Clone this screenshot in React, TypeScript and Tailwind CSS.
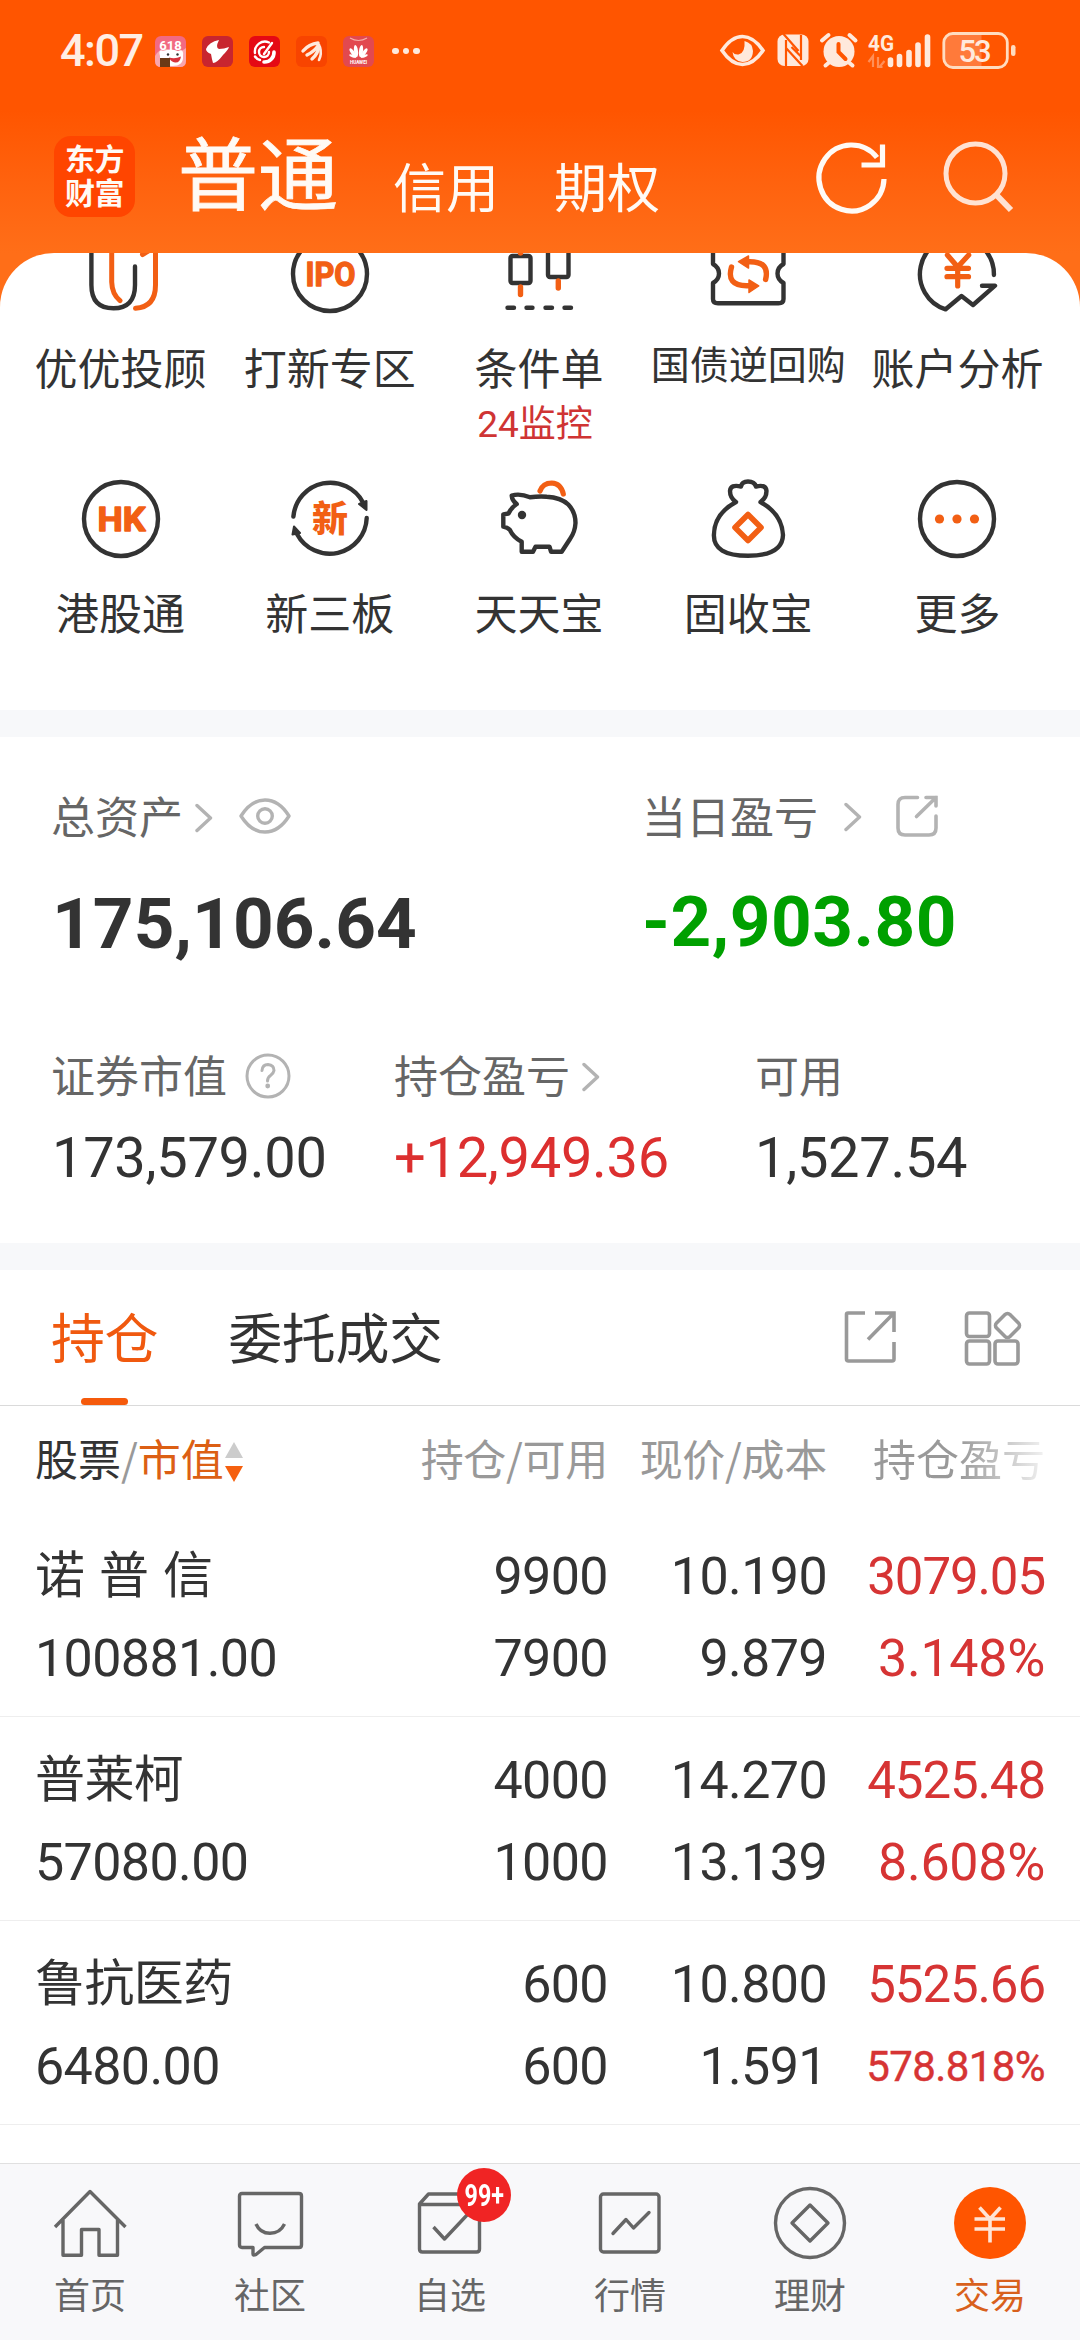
import type { ReactNode } from "react";

const CJK = "font-['Noto_Sans_CJK_SC',sans-serif]";
const NUM = "font-['Roboto','Noto_Sans_CJK_SC',sans-serif]";
const INK = "#333333";
const ORANGE = "#f25f14";

function StatusBar() {
  return (
    <div className="flex h-[102px] items-center pl-[60px] pr-[64px]">
      <span className={`${NUM} w-[95px] text-[45px] font-medium leading-[60px] tracking-[-1.5px] text-[#ffeee4]`}>4:07</span>
      <div className="flex gap-4">
        <svg width="31" height="31" viewBox="0 0 31 31">
          <rect width="31" height="31" rx="6" fill="#f26a82" />
          <path d="M0 20 Q6 10 15 14 T31 12 V25 Q31 31 25 31 H6 Q0 31 0 25Z" fill="#f9a6ae" />
          <path d="M5 20 Q3 13 8 15 Q16 12 23 15 Q29 12 28 20 Q29 30 17 30 Q4 30 5 20Z" fill="#fff" />
          <text x="15.500" y="13.500" textAnchor="middle" fontSize="13" fontWeight="700" fill="#fff" fontFamily="Roboto">618</text>
          <circle cx="13" cy="18.500" r="1.200" fill="#333" /><circle cx="22.500" cy="18.500" r="1.200" fill="#333" />
          <path d="M14 21.500 Q20 23.500 26 20.500 Q25 27 20 26.500 Q16 26 14 21.500Z" fill="#d8323c" />
          <rect x="5" y="22" width="10" height="9" fill="#6b3a16" />
        </svg>
        <svg width="31" height="31" viewBox="0 0 31 31">
          <rect width="31" height="31" rx="6" fill="#c8252f" />
          <path d="M17 4 Q7 6 4 13 Q4 16 9 18 Q10 24 11 27 Q15 27 21 19 Q26 14 27 11 Q22 13 17 13 Q13 12 17 4Z" fill="#fff" />
        </svg>
        <svg width="31" height="31" viewBox="0 0 31 31">
          <rect width="31" height="31" rx="6" fill="#e50914" />
          <g fill="none" stroke="#fff" strokeWidth="2.400" strokeLinecap="round">
            <path d="M20 6.500 A10 10 0 0 0 6 17" /><path d="M15 26 A9.500 9.500 0 0 0 25 16" strokeWidth="3.600" />
            <path d="M23 7 L15 18" /><path d="M15 11 A5 5 0 1 0 20 16" />
            <path d="M6 20.500 Q8 23.500 11 24" />
          </g>
        </svg>
        <svg width="31" height="31" viewBox="0 0 31 31">
          <rect width="31" height="31" rx="6" fill="#f84400" />
          <g fill="none" stroke="#ffe9dc" strokeLinecap="round" strokeWidth="3.400">
            <path d="M22 7 Q13 8 7 15" /><path d="M22.500 9 Q19 15 11 19" /><path d="M23 10 Q22 18 16 23" /><path d="M24 11 Q26 18 23 24" strokeWidth="2.600" />
          </g>
        </svg>
        <svg width="31" height="31" viewBox="0 0 31 31">
          <rect width="31" height="31" rx="6" fill="#e2494f" />
          <path d="M7 2 Q15.500 7 24 2" fill="none" stroke="#f5b0a8" strokeWidth="1.200" />
          <g fill="#fff">
            <ellipse cx="13" cy="15" rx="2" ry="6" transform="rotate(-8 13 15)" /><ellipse cx="18" cy="15" rx="2" ry="6" transform="rotate(8 18 15)" />
            <ellipse cx="10" cy="17" rx="1.800" ry="5.500" transform="rotate(-35 10 17)" /><ellipse cx="21" cy="17" rx="1.800" ry="5.500" transform="rotate(35 21 17)" />
            <ellipse cx="9.500" cy="20" rx="1.300" ry="3.500" transform="rotate(-70 9.500 20)" /><ellipse cx="21.500" cy="20" rx="1.300" ry="3.500" transform="rotate(70 21.500 20)" />
          </g>
          <text x="15.500" y="27.500" textAnchor="middle" fontSize="4.600" fontWeight="700" fill="#fff" fontFamily="Roboto">HUAWEI</text>
        </svg>
      </div>
      <div className="ml-[18px] flex gap-1">
        <i className="size-[6.5px] rounded-full bg-[#ffe9dc]" />
        <i className="size-[6.5px] rounded-full bg-[#ffe9dc]" />
        <i className="size-[6.5px] rounded-full bg-[#ffe9dc]" />
      </div>
      <svg className="ml-auto" width="297" height="42" viewBox="718.500 30 297 42" fill="#ffe9dc">
        <path d="M721.500 50.500 Q731 36.500 742 36.500 T762.500 50.500 Q753 64.500 742 64.500 T721.500 50.500Z" fill="none" stroke="#ffe9dc" strokeWidth="3.600" />
        <path d="M744 41 Q752 43 752.500 51 Q752 62 742 62 Q733 61 732 52 Q734 55 738 54.500 Q745 53 744 41Z" />
        <rect x="777" y="34.500" width="31" height="31.500" rx="7" />
        <path d="M785.500 66 V40 M783 34 L798 51 M800.500 35 V60 M785.500 48 L802 66 M791 47 L800 56" stroke="#ff5500" strokeWidth="2.200" fill="none" />
        <circle cx="838.500" cy="51.500" r="15.500" />
        <path d="M821.500 40.500 L828 35 M855 40.500 L849 35 M828 63 L825 65.500 M849 63 L852 65.500" stroke="#ffe9dc" strokeWidth="4" strokeLinecap="round" />
        <path d="M838 44 V52 L845 59" stroke="#ff5500" strokeWidth="4" fill="none" strokeLinecap="round" />
        <text x="867.500" y="50.500" fontSize="22.500" fontWeight="700" fontFamily="Roboto" textLength="26" lengthAdjust="spacingAndGlyphs">4G</text>
        <path d="M868 62 L872.500 56 V67 M882 67 L877.500 67 V57 M879 67 L884 61" fill="none" stroke="#ff8f58" strokeWidth="2.200" />
        <g stroke="#ffe9dc" strokeWidth="5.600" strokeLinecap="round">
          <path d="M890 60 V64.500 M899 56.500 V64.500 M908.500 52.500 V64.500 M917.500 45 V64.500 M927 37 V64.500" />
        </g>
        <path d="M953 34 H981 V67 H953 Q944 67 944 58 V43 Q944 34 953 34Z" fill="#ff7a3a" />
        <rect x="943.300" y="33.500" width="63.500" height="34" rx="9" fill="none" stroke="#ffdcc0" strokeWidth="2.800" />
        <rect x="1010.500" y="45" width="4.500" height="11" rx="2.200" fill="#ffdcc0" />
        <text x="974.500" y="61.500" fontSize="31" fontWeight="500" fontFamily="Roboto" textAnchor="middle" textLength="33">53</text>
      </svg>
    </div>
  );
}

function Header() {
  return (
    <div className={`${CJK} flex h-[151px] items-start pl-[54px] text-[#fffaf5]`}>
      <div className="mt-[34px] size-[81px] break-all rounded-[17px] bg-[#ff4500] pl-[11px] pr-[8px] pt-[4px] text-[30px] font-bold leading-[34px] tracking-[-0.5px]">
        东方财富
      </div>
      <span className="ml-[43px] mt-[11px] text-[80px] leading-[112px] [-webkit-text-stroke:0.8px_#fffaf5]">普通</span>
      <span className="ml-[55px] mt-[48px] text-[53px] leading-[70px]">信用</span>
      <span className="ml-[55px] mt-[48px] text-[53px] leading-[70px]">期权</span>
      <svg className="ml-auto mt-[34px]" width="82" height="82" viewBox="808 136 82 82" fill="none" stroke="#fffaf5" strokeWidth="5.200">
        <path d="M883 179 A32.500 33 0 1 1 876 157.500" />
        <path d="M881.500 144.500 V165 H860.500" />
      </svg>
      <svg className="ml-[49px] mr-[58px] mt-[34px]" width="82" height="82" viewBox="940 136 82 82" fill="none" stroke="#ffe2d2" strokeWidth="5">
        <circle cx="975.500" cy="173.500" r="29.500" />
        <path d="M996 194.500 L1011 210" strokeWidth="6" />
      </svg>
    </div>
  );
}

function GlyphBox({ children }: { children: ReactNode }) {
  return (
    <svg width="84" height="84" viewBox="0 0 84 84" fill="none" stroke={INK} strokeWidth="4.400" strokeLinecap="round" strokeLinejoin="round">
      {children}
    </svg>
  );
}

const shortcuts: { label: string; note?: string; small?: boolean; icon: ReactNode }[] = [
  {
    label: "优优投顾",
    icon: (
      <>
        <path d="M12.400 10 V53 Q12.400 76.300 34.500 76.300 Q56 76.300 56 53 V34.500" />
        <path d="M32.700 10 V50 Q33 62 41 68.700 M76.500 10 V53 Q76.500 75 56.500 76.300 M63.500 22.500 L76 15" stroke={ORANGE} strokeWidth="5" />
      </>
    ),
  },
  {
    label: "打新专区",
    icon: (
      <>
        <circle cx="42" cy="42" r="37" />
        <text x="42.500" y="54" textAnchor="middle" fontSize="34" fontWeight="700" fill={ORANGE} stroke={ORANGE} strokeWidth="1.400" fontFamily="Roboto" textLength="50" lengthAdjust="spacingAndGlyphs">IPO</text>
      </>
    ),
  },
  {
    label: "条件单",
    note: "24监控",
    icon: (
      <>
        <rect x="13.500" y="24" width="20" height="27" rx="2" />
        <rect x="51" y="12" width="20.500" height="33" rx="2" />
        <path d="M23.500 55 V62.500 M61.300 49 V56 M23.500 14 V21" stroke={ORANGE} strokeWidth="5.400" />
        <path d="M10.500 75.700 H17 M29.500 75.700 H35.500 M48.500 75.700 H55 M67.500 75.700 H74" />
      </>
    ),
  },
  {
    label: "国债逆回购",
    small: true,
    icon: (
      <>
        <path d="M7 10 V32 Q13 35.500 13 41.500 Q13 47.500 7 51 V67 Q7 71.300 12 71.300 H72.500 Q77.500 71.300 77.500 67 V51 Q71.500 47.500 71.500 41.500 Q71.500 35.500 77.500 32 V10" />
        <path d="M25.500 35 Q20 53.700 40.600 53.700 H44 M59.600 47.500 Q64 29.700 44 29.700 H40" stroke={ORANGE} strokeWidth="5.400" />
        <path d="M43 48 L52.700 54 L43 60.500Z M42.500 24 L32.500 29.700 L42.500 36Z" fill={ORANGE} stroke={ORANGE} strokeWidth="1.500" />
      </>
    ),
  },
  {
    label: "账户分析",
    icon: (
      <>
        <path d="M78.900 43 A37 37 0 1 0 30.600 77.300 L46.500 64 L58 73 L80 53.700 H67" />
        <path d="M32.400 23 L42.700 35 L53.700 23 M32 36.300 H53.500 M32 44.700 H53.500 M42.700 35 V54" stroke={ORANGE} strokeWidth="5.200" />
      </>
    ),
  },
  {
    label: "港股通",
    icon: (
      <>
        <circle cx="42" cy="42" r="37" />
        <text x="42.500" y="54" textAnchor="middle" fontSize="34" fontWeight="700" fill={ORANGE} stroke={ORANGE} strokeWidth="1.400" fontFamily="Roboto" textLength="48" lengthAdjust="spacingAndGlyphs">HK</text>
      </>
    ),
  },
  {
    label: "新三板",
    icon: (
      <>
        <path d="M5.400 39.500 A37 37 0 0 1 75 25.500 M78.700 41 A37 37 0 0 1 9 57" />
        <path d="M71 27 L78.500 24 V33Z M6 49.500 L12 56 L4.500 57.500Z" fill={INK} strokeWidth="2" />
        <text x="42" y="55" textAnchor="middle" fontSize="36" fontWeight="900" fill={ORANGE} stroke="none" fontFamily="Noto Sans CJK SC">新</text>
      </>
    ),
  },
  {
    label: "天天宝",
    icon: (
      <>
        <path d="M14.700 18.500 Q23 16 33 20.300 Q42 19 49.700 19.700 Q64 20.500 71.300 27.500 Q78.500 35 78.500 46 Q78 55 73 62 L64.700 74.700 H54 L52.500 69.700 H38.500 L36 74.700 H24.700 V64.700 Q16 60 13 53 Q10.500 50.500 6.300 49.700 V37.300 L11.500 36.500 Q14 31 19.700 27 Q15 23.500 14.700 18.500Z" />
        <circle cx="25" cy="38" r="4.200" fill={INK} stroke="none" />
        <path d="M43 14 Q46 6 54.700 6 Q64 6.500 66.300 17" stroke={ORANGE} strokeWidth="5.200" />
      </>
    ),
  },
  {
    label: "固收宝",
    icon: (
      <>
        <path d="M30 25 Q8 37 7.900 58 Q7.500 78.700 42 78.700 Q76.500 78.700 77 58 Q76 37 54.500 25 Q60.500 21 60.500 14 Q60 7 50 9.500 Q48.500 4.500 42 4.500 Q36 4.500 35 9.500 Q24.500 7 24 14 Q24 21 30 25Z" />
        <path d="M42 37.500 L55 50.500 L42 63.500 L29 50.500Z" stroke={ORANGE} strokeWidth="5.600" />
      </>
    ),
  },
  {
    label: "更多",
    icon: (
      <>
        <circle cx="42" cy="42" r="37" />
        <g fill={ORANGE} stroke="none"><circle cx="24.500" cy="42" r="4.600" /><circle cx="42" cy="42" r="4.600" /><circle cx="59.500" cy="42" r="4.600" /></g>
      </>
    ),
  },
];

function Shortcuts() {
  return (
    <div className="h-[457px] overflow-hidden rounded-t-[54px] bg-white">
      <div className="-mt-[21px] grid auto-rows-[245px] grid-cols-5 pl-4 pr-[18px]">
        {shortcuts.map((s) => (
          <div key={s.label} className={`${CJK} flex flex-col items-center text-[#333]`}>
            <GlyphBox>{s.icon}</GlyphBox>
            <span className={s.small ? "mt-[16px] whitespace-nowrap text-[39px] leading-[60px]" : "mt-[20px] whitespace-nowrap text-[43px] leading-[60px]"}>{s.label}</span>
            {s.note && <span className={`${NUM} mr-[8px] whitespace-nowrap text-[37px] leading-[58px] text-[#cf3434]`}>{s.note}</span>}
          </div>
        ))}
      </div>
    </div>
  );
}

function Chevron({ className }: { className: string }) {
  return (
    <svg className={className} width="18" height="30" viewBox="0 0 18 30" fill="none" stroke="#b3b3b3" strokeWidth="3.400" strokeLinecap="round" strokeLinejoin="round">
      <path d="M2 2.500 L15.500 15 L2 27.500" />
    </svg>
  );
}

function Assets() {
  const label = `${CJK} flex h-[60px] items-center whitespace-nowrap text-[44px] leading-[60px] text-[#666]`;
  const value = `${NUM} whitespace-nowrap text-[56px] leading-[70px] tracking-[-0.3px]`;
  return (
    <section className="h-[506px] bg-white pl-[51px] pt-[48px]">
      <div className="grid grid-cols-[591px_1fr]">
        <div>
          <div className={label}>
            总资产
            <Chevron className="ml-[12px] mt-1.5" />
            <svg className="ml-[26px] mt-0.5" width="52" height="38" viewBox="0 0 52 38" fill="none" stroke="#b3b3b3" strokeWidth="3.400">
              <path d="M2 19 Q12 3 26 3 T50 19 Q40 35 26 35 T2 19Z" strokeLinejoin="round" /><circle cx="26" cy="19" r="7.300" />
            </svg>
          </div>
          <div className={`${NUM} mt-[32px] pl-px text-[71px] font-bold leading-[94px] tracking-[0.1px] text-[#333]`}>175,106.64</div>
        </div>
        <div>
          <div className={label}>
            当日盈亏
            <Chevron className="ml-[26px] mt-1" />
            <svg className="ml-[33px] mt-0.5" width="44" height="44" viewBox="0 0 44 44" fill="none" stroke="#b3b3b3" strokeWidth="3.600" strokeLinecap="round">
              <path d="M22.500 3.500 H10 Q3 3.500 3 10.500 V34 Q3 41 10 41 H34 Q41 41 41 34 V22 M31 3.500 H41 V12 M41 3.500 L21.500 22.500" />
            </svg>
          </div>
          <div className={`${NUM} mt-[30px] text-[71px] font-bold leading-[94px] tracking-[0.5px] text-[#00a000]`}>-2,903.80</div>
        </div>
      </div>
      <div className="mt-[73px] grid grid-cols-[343px_361px_1fr]">
        <div>
          <div className={label}>
            证券市值
            <svg className="ml-[18px] mt-1" width="46" height="46" viewBox="0 0 46 46" fill="none" stroke="#b3b3b3" strokeWidth="3">
              <circle cx="23" cy="23" r="21" />
              <path d="M17 17.500 Q17.500 11.500 23 11.500 Q29 12 29 17.500 Q28.500 20.500 25.500 22.500 Q22.500 24.500 22.500 28" strokeLinecap="round" />
              <circle cx="22.700" cy="33" r="2.400" fill="#b3b3b3" stroke="none" />
            </svg>
          </div>
          <div className={`${value} mt-[19px] pl-px text-[#333]`}>173,579.00</div>
        </div>
        <div>
          <div className={label}>
            持仓盈亏
            <Chevron className="ml-[12px] mt-1.5" />
          </div>
          <div className={`${value} mt-[19px] text-[#dc2f2f]`}>+12,949.36</div>
        </div>
        <div>
          <div className={label}>可用</div>
          <div className={`${value} mt-[19px] text-[#333]`}>1,527.54</div>
        </div>
      </div>
    </section>
  );
}

const holdings = [
  { name: "诺 普 信", value: "100881.00", qty: "9900", avail: "7900", price: "10.190", cost: "9.879", pl: "3079.05", pct: "3.148%" },
  { name: "普莱柯", value: "57080.00", qty: "4000", avail: "1000", price: "14.270", cost: "13.139", pl: "4525.48", pct: "8.608%" },
  { name: "鲁抗医药", value: "6480.00", qty: "600", avail: "600", price: "10.800", cost: "1.591", pl: "5525.66", pct: "578.818%" },
];

function Holdings() {
  const cols = "grid grid-cols-[361px_212px_219px_1fr] pl-[35px] pr-[35px]";
  return (
    <section className="h-[893px] overflow-hidden bg-white">
      <div className={`${CJK} flex h-[136px] items-start border-b border-[#dadada] pl-[51px] text-[54px] leading-[80px] tracking-[-0.4px]`}>
        <div className="flex h-[135px] flex-col items-center justify-between pt-[26px] text-[#f0590f]">
          持仓
          <i className="h-[7px] w-[47px] rounded-full bg-[#f55a0c]" />
        </div>
        <span className="ml-[70px] pt-[26px] text-[#333]">委托成交</span>
        <svg className="ml-auto mt-[38px]" width="56" height="56" viewBox="0 0 56 56" fill="none" stroke="#999" strokeWidth="3.600">
          <path d="M23 5 H6 Q4.500 5 4.500 6.500 V51 Q4.500 53 6.500 53 H50 Q52 53 52 51 V34 M33 5 H52 V24 M51 6 L26 31.500" />
        </svg>
        <svg className="ml-[64px] mr-[58px] mt-[38px]" width="60" height="60" viewBox="0 0 60 60" fill="none" stroke="#999" strokeWidth="3.600">
          <rect x="4.500" y="5" width="23" height="23.500" rx="3" /><rect x="4.500" y="33" width="23" height="23" rx="3" /><rect x="33" y="33" width="23" height="23" rx="3" />
          <rect x="36" y="8" width="19" height="19" rx="3.500" transform="rotate(45 45.500 17.500)" />
        </svg>
      </div>
      <div className={`${CJK} ${cols} h-[107px] whitespace-nowrap pt-[21px] text-[43px] leading-[60px] text-[#999]`}>
        <div className="flex items-start text-[#333]">
          股票<span className="text-[#999]">/</span><span className="text-[#dc5f14]">市值</span>
          <svg className="mt-[14px]" width="20" height="42" viewBox="0 0 20 42">
            <path d="M10 1 L19 17 H1Z" fill="#ccc" /><path d="M10 41 L19 25 H1Z" fill="#f5600f" />
          </svg>
        </div>
        <span className="text-right tracking-[-0.3px]">持仓/可用</span>
        <span className="text-right tracking-[-0.3px]">现价/成本</span>
        <span className="bg-linear-to-r from-[#999] from-[60%] to-[#f2f2f2] bg-clip-text text-right text-transparent">持仓盈亏</span>
      </div>
      {holdings.map((h) => (
        <div key={h.name} className={`${NUM} ${cols} h-[204px] grid-rows-[82px_82px] items-center whitespace-nowrap border-b border-[#eeeeee] pt-[23px] text-[52px] leading-[82px] tracking-[-0.6px] text-[#333]`}>
          <span className={`${CJK} pb-[11px] text-[50px] leading-[71px] [word-spacing:4px]`}>{h.name}</span>
          <span className="text-right">{h.qty}</span>
          <span className="text-right">{h.price}</span>
          <span className="text-right text-[51px] tracking-[-1.1px] text-[#d63434]">{h.pl}</span>
          <span>{h.value}</span>
          <span className="text-right">{h.avail}</span>
          <span className="text-right">{h.cost}</span>
          <span className={h.pct.length > 7 ? "text-right text-[42px] tracking-[-0.6px] text-[#d63434] [-webkit-text-stroke:0.4px_#d63434]" : "text-right tracking-[-0.3px] text-[#d63434]"}>{h.pct}</span>
        </div>
      ))}
    </section>
  );
}

const tabs: { label: string; active?: boolean; badge?: string; icon: ReactNode }[] = [
  { label: "首页", icon: <path d="M5 44 L40 8.500 L75.500 44 M13 37 V72.300 H31.500 V46.500 H49 V72.300 H67.500 V37" /> },
  { label: "社区", icon: <><path d="M12 10.500 H69 Q71.500 10.500 71.500 13 V62 Q71.500 64.500 69 64.500 H34.500 L26 71.500 Q23 73 23 71 V64.500 H12 Q9.500 64.500 9.500 62 V13 Q9.500 10.500 12 10.500Z" /><path d="M26 41 Q30 50.300 40 50.300 T54.500 41" /></> },
  { label: "自选", badge: "99+", icon: <path d="M9.500 21 L18.500 11 H63 L69.500 21 V66 Q69.500 69 66.500 69 H12.500 Q9.500 69 9.500 66Z M9.500 21.500 H69.500 M23.500 44 L34.500 56 L58 31" /> },
  { label: "行情", icon: <><rect x="10.500" y="11" width="58.500" height="58" rx="3" /><path d="M23 50.500 L36 36.500 L43.500 45 L59 29.500" strokeLinecap="round" /></> },
  { label: "理财", icon: <><circle cx="40" cy="40" r="34.500" /><path d="M40 22 L58 40 L40 58 L22 40Z" /></> },
  { label: "交易", active: true, icon: <><circle cx="40" cy="40" r="36" fill="#ff5500" stroke="none" /><path d="M29.500 24.500 L40 36 L50.500 24.500 M24.500 36 H55 M24.500 46 H55 M40 36 V59.500" stroke="#ffe4d6" strokeWidth="3.600" /></> },
];

function TabBar() {
  return (
    <nav className="grid h-[177px] grid-cols-6 border-t border-[#e0e0e0] bg-[#f8f8fa]">
      {tabs.map((t) => (
        <div key={t.label} className={`${CJK} relative flex flex-col items-center pt-[19px] text-[36px] leading-[50px] ${t.active ? "text-[#d8601c]" : "text-[#666]"}`}>
          <svg width="80" height="80" viewBox="0 0 80 80" fill="none" stroke="#666" strokeWidth="3.400" strokeLinejoin="round">{t.icon}</svg>
          <span className="mt-[5px]">{t.label}</span>
          {t.badge && (
            <span className={`${NUM} absolute left-[97px] top-[4px] flex size-[54px] items-center justify-center rounded-full bg-[#f02424] text-[31px] font-bold leading-none text-white`}>
              <span className="scale-x-[0.75]">{t.badge}</span>
            </span>
          )}
        </div>
      ))}
    </nav>
  );
}

export default function App() {
  return (
    <div className="flex h-[2340px] w-[1080px] flex-col overflow-hidden bg-white">
      <div className="bg-linear-to-b from-[#ff5500] from-[110px] to-[#ff6e18] to-[253px]">
        <StatusBar />
        <Header />
        <Shortcuts />
      </div>
      <div className="h-[27px] bg-[#f7f8fa]" />
      <Assets />
      <div className="h-[27px] bg-[#f7f8fa]" />
      <Holdings />
      <TabBar />
    </div>
  );
}
